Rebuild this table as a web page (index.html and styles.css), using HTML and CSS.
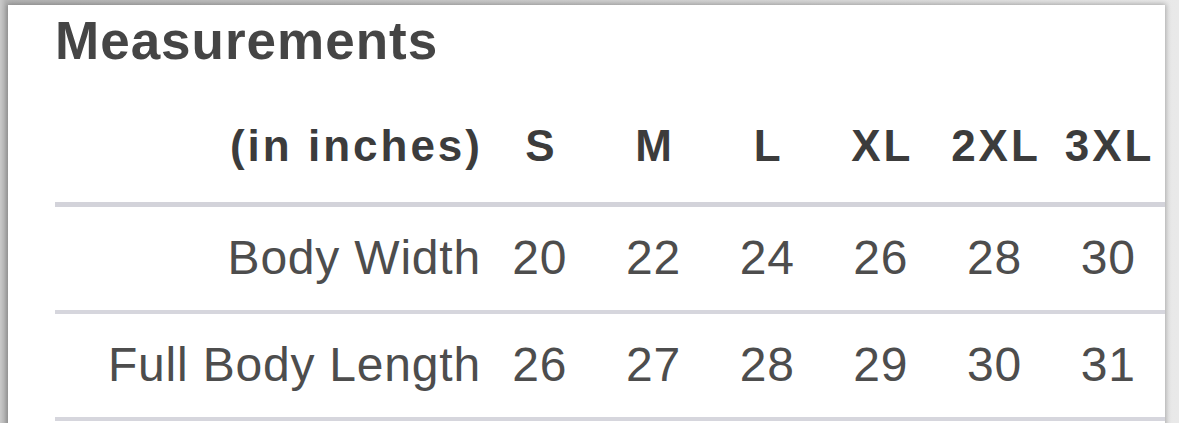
FILE: index.html
```html
<!DOCTYPE html>
<html lang="en">
<head>
<meta charset="utf-8">
<title>Measurements</title>
<link rel="stylesheet" href="styles.css">
</head>
<body>
<div class="card">
  <h1 class="title">Measurements</h1>
  <div class="table">
    <div class="row head">
      <div class="label">(in inches)</div>
      <div class="cell">S</div>
      <div class="cell">M</div>
      <div class="cell">L</div>
      <div class="cell">XL</div>
      <div class="cell">2XL</div>
      <div class="cell">3XL</div>
    </div>
    <div class="row">
      <div class="label">Body Width</div>
      <div class="cell">20</div>
      <div class="cell">22</div>
      <div class="cell">24</div>
      <div class="cell">26</div>
      <div class="cell">28</div>
      <div class="cell">30</div>
    </div>
    <div class="row">
      <div class="label">Full Body Length</div>
      <div class="cell">26</div>
      <div class="cell">27</div>
      <div class="cell">28</div>
      <div class="cell">29</div>
      <div class="cell">30</div>
      <div class="cell">31</div>
    </div>
  </div>
</div>
</body>
</html>
```
FILE: styles.css
```css
html, body {
  margin: 0;
  padding: 0;
}
body {
  width: 1179px;
  height: 423px;
  overflow: hidden;
  background: linear-gradient(to right, #c9c9c9 0, #b4b4b4 6px, #e9e9e9 100%);
  font-family: "Liberation Sans", Arial, sans-serif;
}
.card {
  margin: 5px 0 0 8px;
  width: 1157px;
  height: 430px;
  background: #fff;
  box-shadow: 0 0 5px 1px rgba(0, 0, 0, 0.28);
  padding: 9px 0 0 47px;
  box-sizing: border-box;
}
.title {
  margin: 0;
  font-size: 53px;
  line-height: 53px;
  font-weight: bold;
  letter-spacing: 1px;
  color: #454545;
}
.table {
  margin-top: 57px;
}
.row {
  display: grid;
  grid-template-columns: 428px repeat(6, 1fr);
  align-items: center;
  font-size: 48px;
  line-height: 48px;
  letter-spacing: 0.8px;
  color: #4d4d4d;
  padding: 27px 0 28px;
  border-bottom: 4px solid #d6d6dd;
}
.row.head {
  font-size: 44px;
  line-height: 44px;
  font-weight: bold;
  letter-spacing: 3px;
  color: #3c3c3c;
  padding: 0 0 34px;
  border-bottom-width: 5px;
  border-bottom-color: #d3d3da;
}
.label {
  text-align: right;
  padding-right: 2px;
}
.row.head .label {
  padding-right: 0;
}
.cell {
  text-align: center;
}
.row.head .cell {
  padding-left: 3px;
}
```
